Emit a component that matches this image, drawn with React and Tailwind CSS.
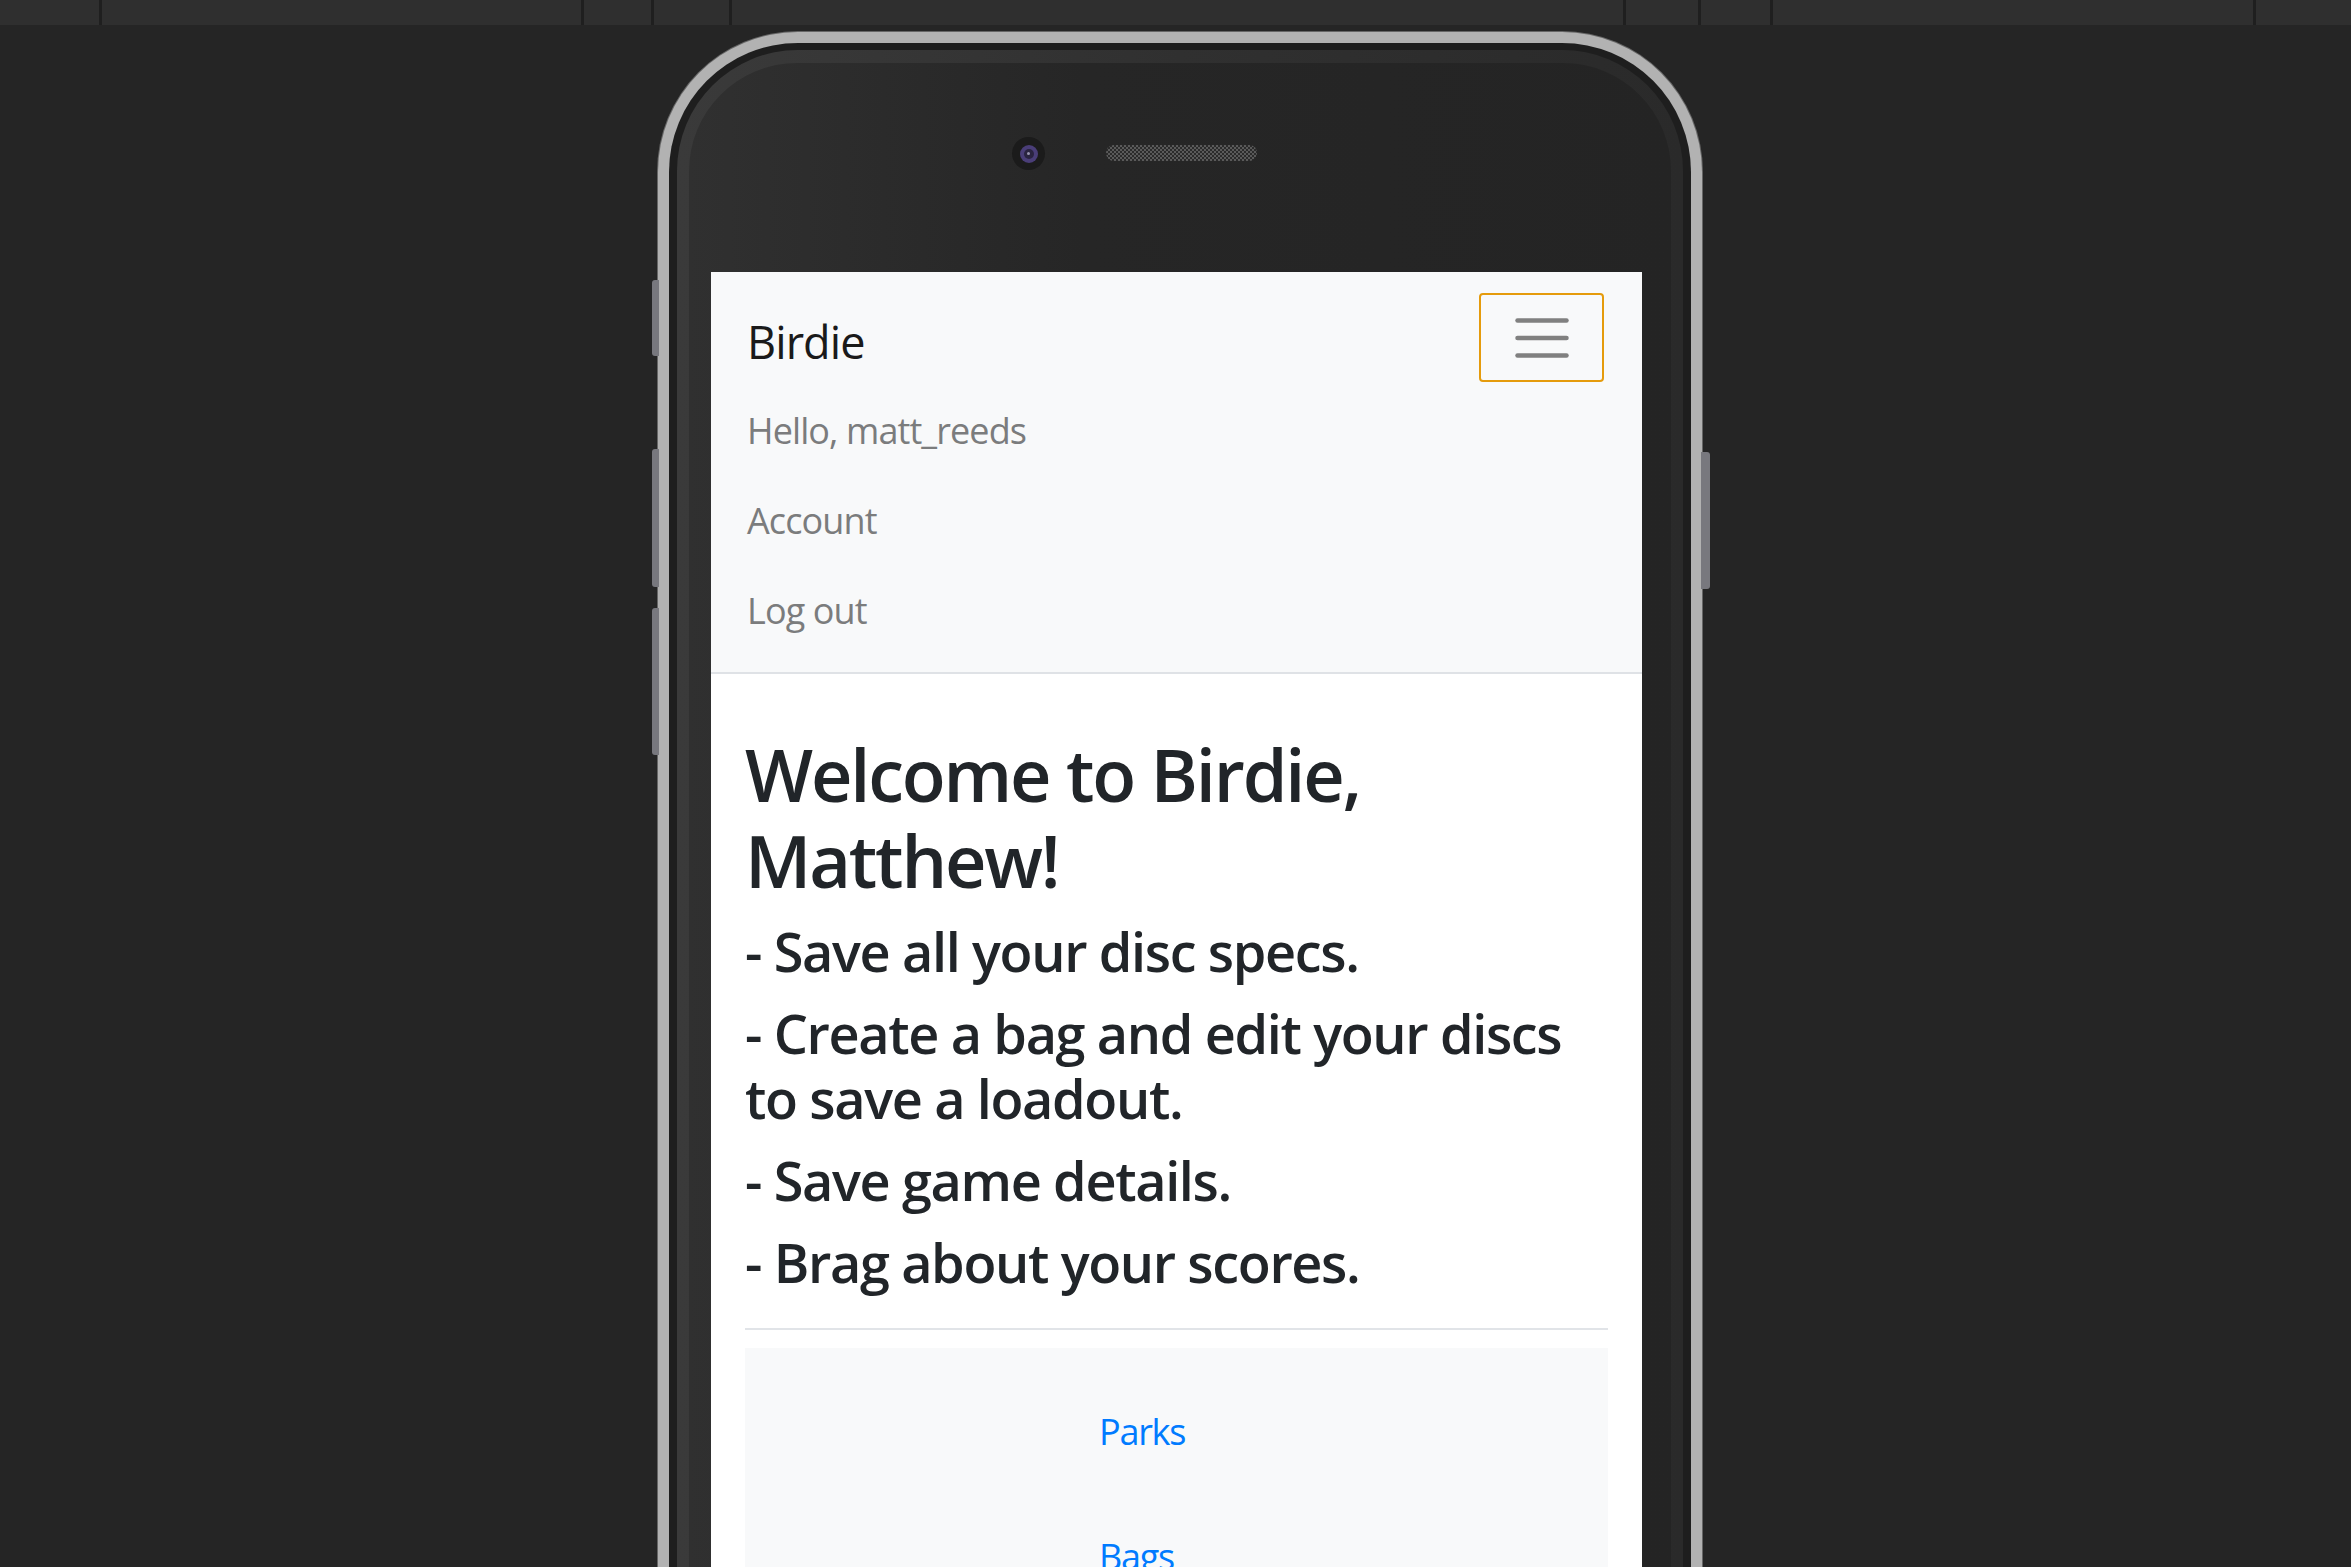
import React from 'react';

const navLinks = ['Hello, matt_reeds', 'Account', 'Log out'];

const TopBar = () => (
  <div className="flex h-[25px] bg-[#2f2f2f]">
    <div className="w-[102px] border-r-[3px] border-[#1f1f1f]" />
    <div className="w-[482px] border-r-[3px] border-[#1f1f1f]" />
    <div className="w-[70px] border-r-[3px] border-[#1f1f1f]" />
    <div className="w-[78px] border-r-[3px] border-[#1f1f1f]" />
    <div className="w-[894px] border-r-[3px] border-[#1f1f1f]" />
    <div className="w-[75px] border-r-[3px] border-[#1f1f1f]" />
    <div className="w-[72px] border-r-[3px] border-[#1f1f1f]" />
    <div className="w-[483px] border-r-[3px] border-[#1f1f1f]" />
    <div className="flex-1" />
  </div>
);

const Hamburger = () => (
  <svg width="54" height="40" viewBox="0 0 54 40">
    <g stroke="#808080" strokeWidth="4.5" strokeLinecap="round">
      <line x1="2.5" y1="2.5" x2="51.5" y2="2.5" />
      <line x1="2.5" y1="20" x2="51.5" y2="20" />
      <line x1="2.5" y1="37.5" x2="51.5" y2="37.5" />
    </g>
  </svg>
);

const Screen = () => (
  <div className="h-[1300px] w-[931px] bg-white">
    {/* Navbar (expanded) */}
    <nav className="border-b-2 border-[#dfe2e6] bg-[#f8f9fa] pb-[20px] pl-[36px] pr-[38px] pt-[21px]">
      <div className="flex h-[89px] items-center justify-between">
        <span className="pt-[8px] text-[45px] leading-[68px] tracking-[-0.02em] text-[#1a1a1a]">Birdie</span>
        <button className="flex h-[89px] w-[125px] items-center justify-center rounded-[4px] border-2 border-[#e59b0c]">
          <Hamburger />
        </button>
      </div>
      {navLinks.map(link => (
        <div key={link} className="flex h-[90px] items-center pt-[7px] text-[36px] tracking-[-0.025em] text-[#7b7c7d]">
          {link}
        </div>
      ))}
    </nav>

    {/* Content */}
    <main className="px-[34px]">
      <h2 className="mb-[16px] mt-[57px] whitespace-nowrap text-[72px] font-semibold leading-[86px] tracking-[-0.03em] text-[#212529]">
        Welcome to Birdie,<br />Matthew!
      </h2>
      <div className="flex flex-col gap-[17px] whitespace-nowrap text-[54px] font-semibold leading-[65px] tracking-[-0.025em] text-[#212529]">
        <h4>- Save all your disc specs.</h4>
        <h4>- Create a bag and edit your discs<br />to save a loadout.</h4>
        <h4>- Save game details.</h4>
        <h4>- Brag about your scores.</h4>
      </div>
      <hr className="mt-[33px] border-t-2 border-[#e1e4e8]" />
      <div className="mt-[18px] flex h-[300px] flex-col gap-[71px] bg-[#f8f9fa] pl-[354px] pt-[57px] text-[36px] leading-[54px] tracking-[-0.035em] text-[#007bff]">
        <a>Parks</a>
        <a>Bags</a>
      </div>
    </main>
  </div>
);

const Phone = () => (
  <div className="relative w-[1044px]">
    {/* side buttons */}
    <div className="absolute left-[-6px] top-[248px] h-[76px] w-[7px] rounded-l-[3px] bg-[#78787e]" />
    <div className="absolute left-[-6px] top-[417px] h-[138px] w-[7px] rounded-l-[3px] bg-[#78787e]" />
    <div className="absolute left-[-6px] top-[576px] h-[147px] w-[7px] rounded-l-[3px] bg-[#78787e]" />
    <div className="absolute right-[-8px] top-[420px] h-[137px] w-[9px] rounded-r-[3px] bg-[#78787e]" />

    <div className="rounded-t-[140px] bg-[#b2b2b2] px-[11px] pt-[11px] shadow-[0_0_0_1px_#666]">
      <div className="rounded-t-[129px] bg-[#1e1e1e] px-[8px] pt-[7px]">
        <div className="rounded-t-[121px] bg-linear-to-r from-[#3a3a3a] via-[#303030] to-[#2a2a2a] px-[12px] pt-[13px]">
          <div className="rounded-t-[108px] bg-linear-to-r from-[#303030] via-[#262626] via-40% to-[#242424] pl-[22px] pr-[29px]">
            <div className="flex h-[209px] items-start pl-[301px] pt-[74px]">
              <div className="flex h-[33px] w-[33px] items-center justify-center rounded-full bg-[#1b1b1b]">
                <div className="flex h-[18px] w-[18px] items-center justify-center rounded-full bg-[#4a3e78]">
                  <div className="flex h-[10px] w-[10px] items-center justify-center rounded-full bg-[#2a2440]">
                    <div className="h-[3px] w-[3px] rounded-full bg-[#9a96b0]" />
                  </div>
                </div>
              </div>
              <div className="ml-[61px] mt-[8px] h-[16px] w-[151px] rounded-full bg-[#2b2b2b] bg-[image:repeating-conic-gradient(#5a5a5a_0_25%,#2b2b2b_0_50%)] bg-[length:4px_4px]" />
            </div>
            <Screen />
          </div>
        </div>
      </div>
    </div>
  </div>
);

export default function App() {
  return (
    <div className="h-[1567px] overflow-hidden bg-[#252525] font-['Open_Sans',sans-serif]">
      <TopBar />
      <div className="pl-[658px] pt-[7px]">
        <Phone />
      </div>
    </div>
  );
}
